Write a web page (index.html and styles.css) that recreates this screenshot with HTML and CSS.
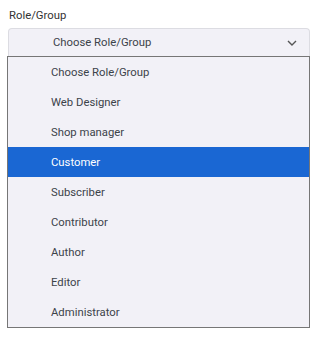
FILE: index.html
```html
<!DOCTYPE html>
<html lang="en">
<head>
  <meta charset="UTF-8" />
  <title>Role/Group</title>
  <link rel="stylesheet" href="styles.css">
</head>
<body>
  <div class="field">
    <label class="field-label">Role/Group</label>
    <div class="select-box">
      <span class="select-value">Choose Role/Group</span>
      <svg class="chevron" width="10" height="6" viewBox="0 0 10 6">
        <path d="M1 1 L5 5 L9 1" fill="none" stroke="#555" stroke-width="1.4"/>
      </svg>
    </div>
    <ul class="options">
      <li>Choose Role/Group</li>
      <li>Web Designer</li>
      <li>Shop manager</li>
      <li class="selected">Customer</li>
      <li>Subscriber</li>
      <li>Contributor</li>
      <li>Author</li>
      <li>Editor</li>
      <li>Administrator</li>
    </ul>
  </div>
</body>
</html>
```

FILE: styles.css
```css
body {
  margin: 0;
  background: #ffffff;
  font-family: Roboto, "Noto Sans", sans-serif;
  font-size: 11.3px;
  color: #3c434a;
}

.field {
  padding: 8px 9px 0 7px;
}

.field-label {
  display: block;
  height: 20px;
  line-height: 16px;
  padding-left: 2px;
  color: #333;
}

.select-box {
  display: flex;
  align-items: center;
  justify-content: space-between;
  height: 28px;
  margin-left: 1px;
  padding: 0 12px 0 44px;
  background: #f2f1f7;
  border: 1px solid #dcdce2;
  border-bottom: none;
  border-radius: 4px 4px 0 0;
  box-sizing: border-box;
}

.chevron {
  display: block;
}

.options {
  list-style: none;
  margin: 0;
  padding: 0;
  background: #f2f1f7;
  border: 1px solid #767676;
}

.options li {
  height: 30px;
  line-height: 31px;
  padding-left: 43px;
}

.options li.selected {
  background: #1a67d3;
  color: #fff;
}
```
